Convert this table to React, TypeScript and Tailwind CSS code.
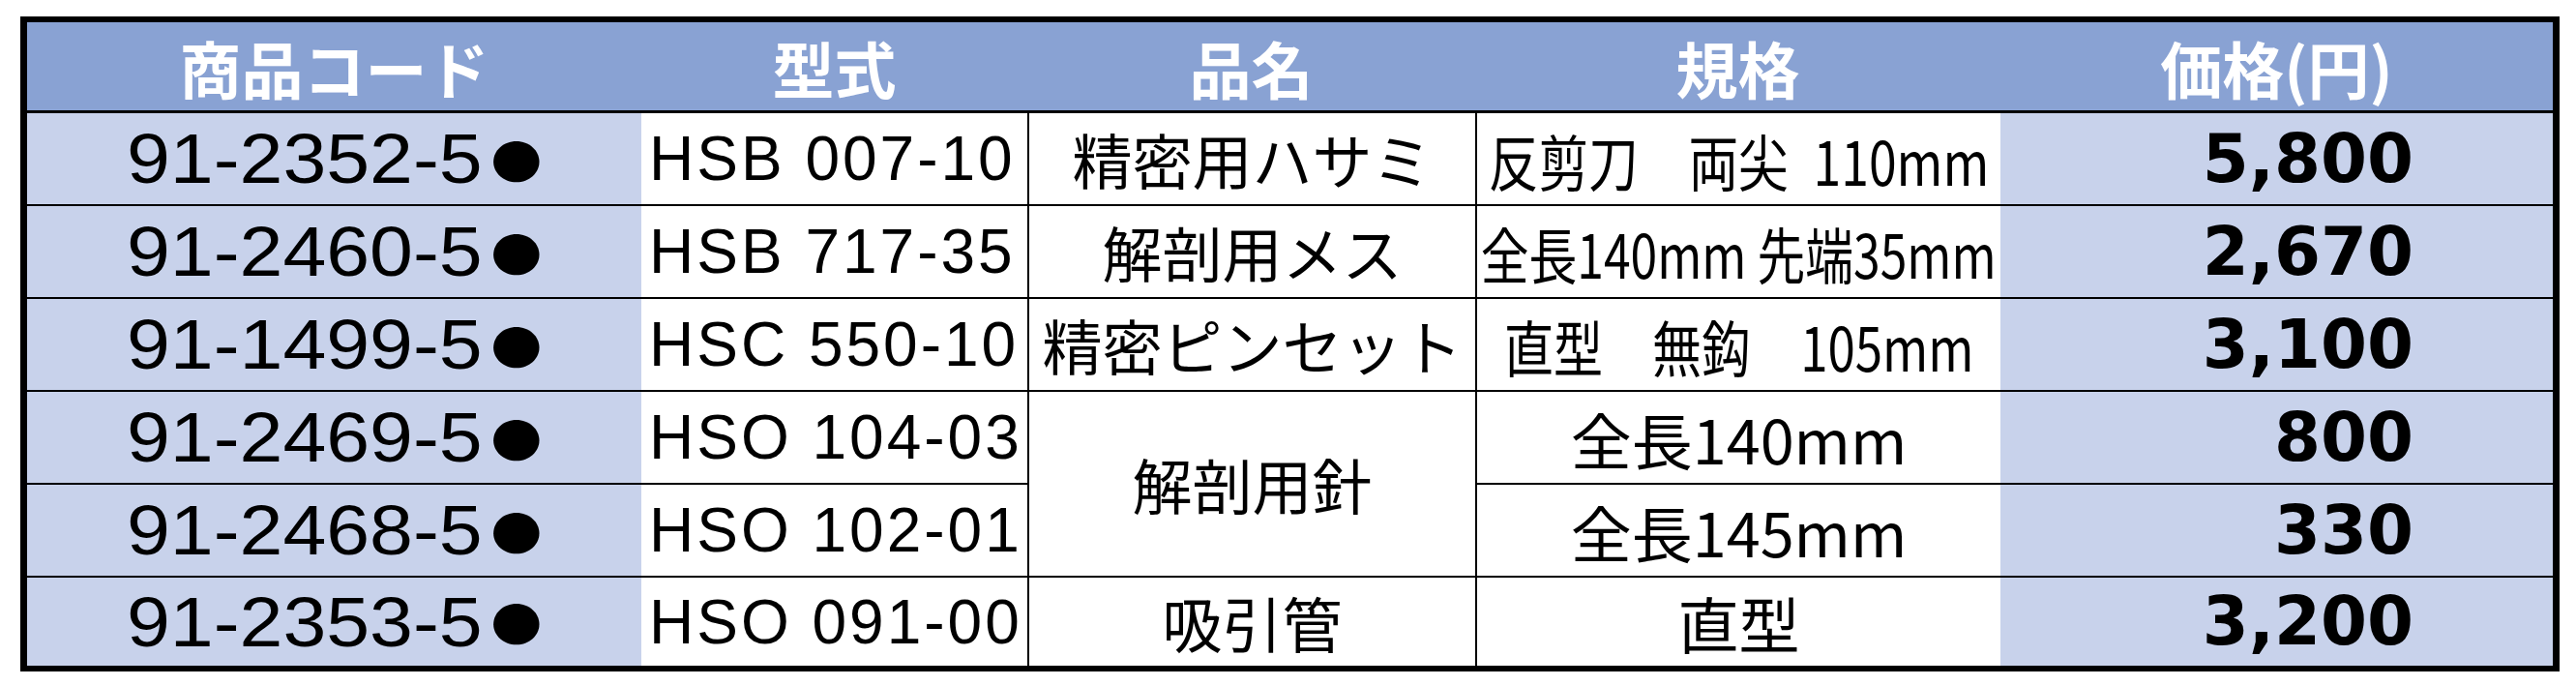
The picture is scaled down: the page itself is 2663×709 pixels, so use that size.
type Row = {
  code: string;
  model: string;
  name?: string;
  nameSpan?: boolean;
  spec: string;
  specScale?: string;
  price: string;
};

const ROWS: Row[] = [
  { code: '91-2352-5', model: 'HSB 007-10', name: '精密用ハサミ', spec: '反剪刀　両尖\u2002110mm', specScale: 'scale-x-82', price: '5,800' },
  { code: '91-2460-5', model: 'HSB 717-35', name: '解剖用メス', spec: '全長140mm 先端35mm', specScale: 'scale-x-79', price: '2,670' },
  { code: '91-1499-5', model: 'HSC 550-10', name: '精密ピンセット', spec: '直型　無鈎　105mm', specScale: 'scale-x-81', price: '3,100' },
  { code: '91-2469-5', model: 'HSO 104-03', name: '解剖用針', nameSpan: true, spec: '全長140mm', price: '800' },
  { code: '91-2468-5', model: 'HSO 102-01', spec: '全長145mm', price: '330' },
  { code: '91-2353-5', model: 'HSO 091-00', name: '吸引管', spec: '直型', price: '3,200' },
];

const HEADERS = ['商品コード', '型式', '品名', '規格', '価格(円)'];

const jp = "font-['Noto_Sans_CJK_JP',sans-serif]";

export default function App() {
  return (
    <div className="min-h-screen bg-white pl-[21px] pt-[17px]">
      <div className="grid w-max grid-cols-[635px_399px_463px_543px_571px] grid-rows-[94px_96px_96px_96px_96px_96px_91px] border-x-[7px] border-y-[6px] border-black text-black">
        {HEADERS.map(h => (
          <div
            key={h}
            className={`flex items-center justify-center border-b-[3px] border-black bg-[#89a2d3] text-[64px] leading-none font-bold text-white ${jp}`}
          >
            {h}
          </div>
        ))}

        {ROWS.map((r, i) => {
          const last = i === ROWS.length - 1;
          const line = last ? '' : 'border-b-2 border-black';
          return [
            <div key={`c${i}`} className={`flex items-center justify-center bg-[#c8d2eb] ${line}`}>
              <span className="inline-flex shrink-0 scale-x-112 items-center whitespace-nowrap font-['Liberation_Sans',sans-serif] text-[72px] leading-none">
                {r.code}
                <span className={`ml-[8px] text-[47px] leading-none ${jp}`}>●</span>
              </span>
            </div>,
            <div
              key={`m${i}`}
              className={`flex items-center bg-white pl-[8px] font-['Liberation_Sans',sans-serif] text-[64px] leading-none tracking-[3px] whitespace-nowrap ${line}`}
            >
              {r.model}
            </div>,
            r.name ? (
              <div
                key={`n${i}`}
                className={`flex items-center justify-center border-l-2 border-black bg-white text-[62px] leading-none whitespace-nowrap ${jp} ${r.nameSpan ? 'row-span-2 border-b-2' : line}`}
              >
                {r.name}
              </div>
            ) : null,
            <div
              key={`s${i}`}
              className={`flex items-center justify-center border-l-2 border-black bg-white ${line}`}
            >
              <span className={`inline-block shrink-0 whitespace-nowrap text-[63px] leading-none ${jp} ${r.specScale ?? ''}`}>
                {r.spec}
              </span>
            </div>,
            <div
              key={`p${i}`}
              className={`flex items-center justify-end bg-[#c8d2eb] pr-[144px] font-['DejaVu_Sans',sans-serif] text-[69px] leading-none font-bold ${line}`}
            >
              {r.price}
            </div>,
          ];
        })}
      </div>
    </div>
  );
}
